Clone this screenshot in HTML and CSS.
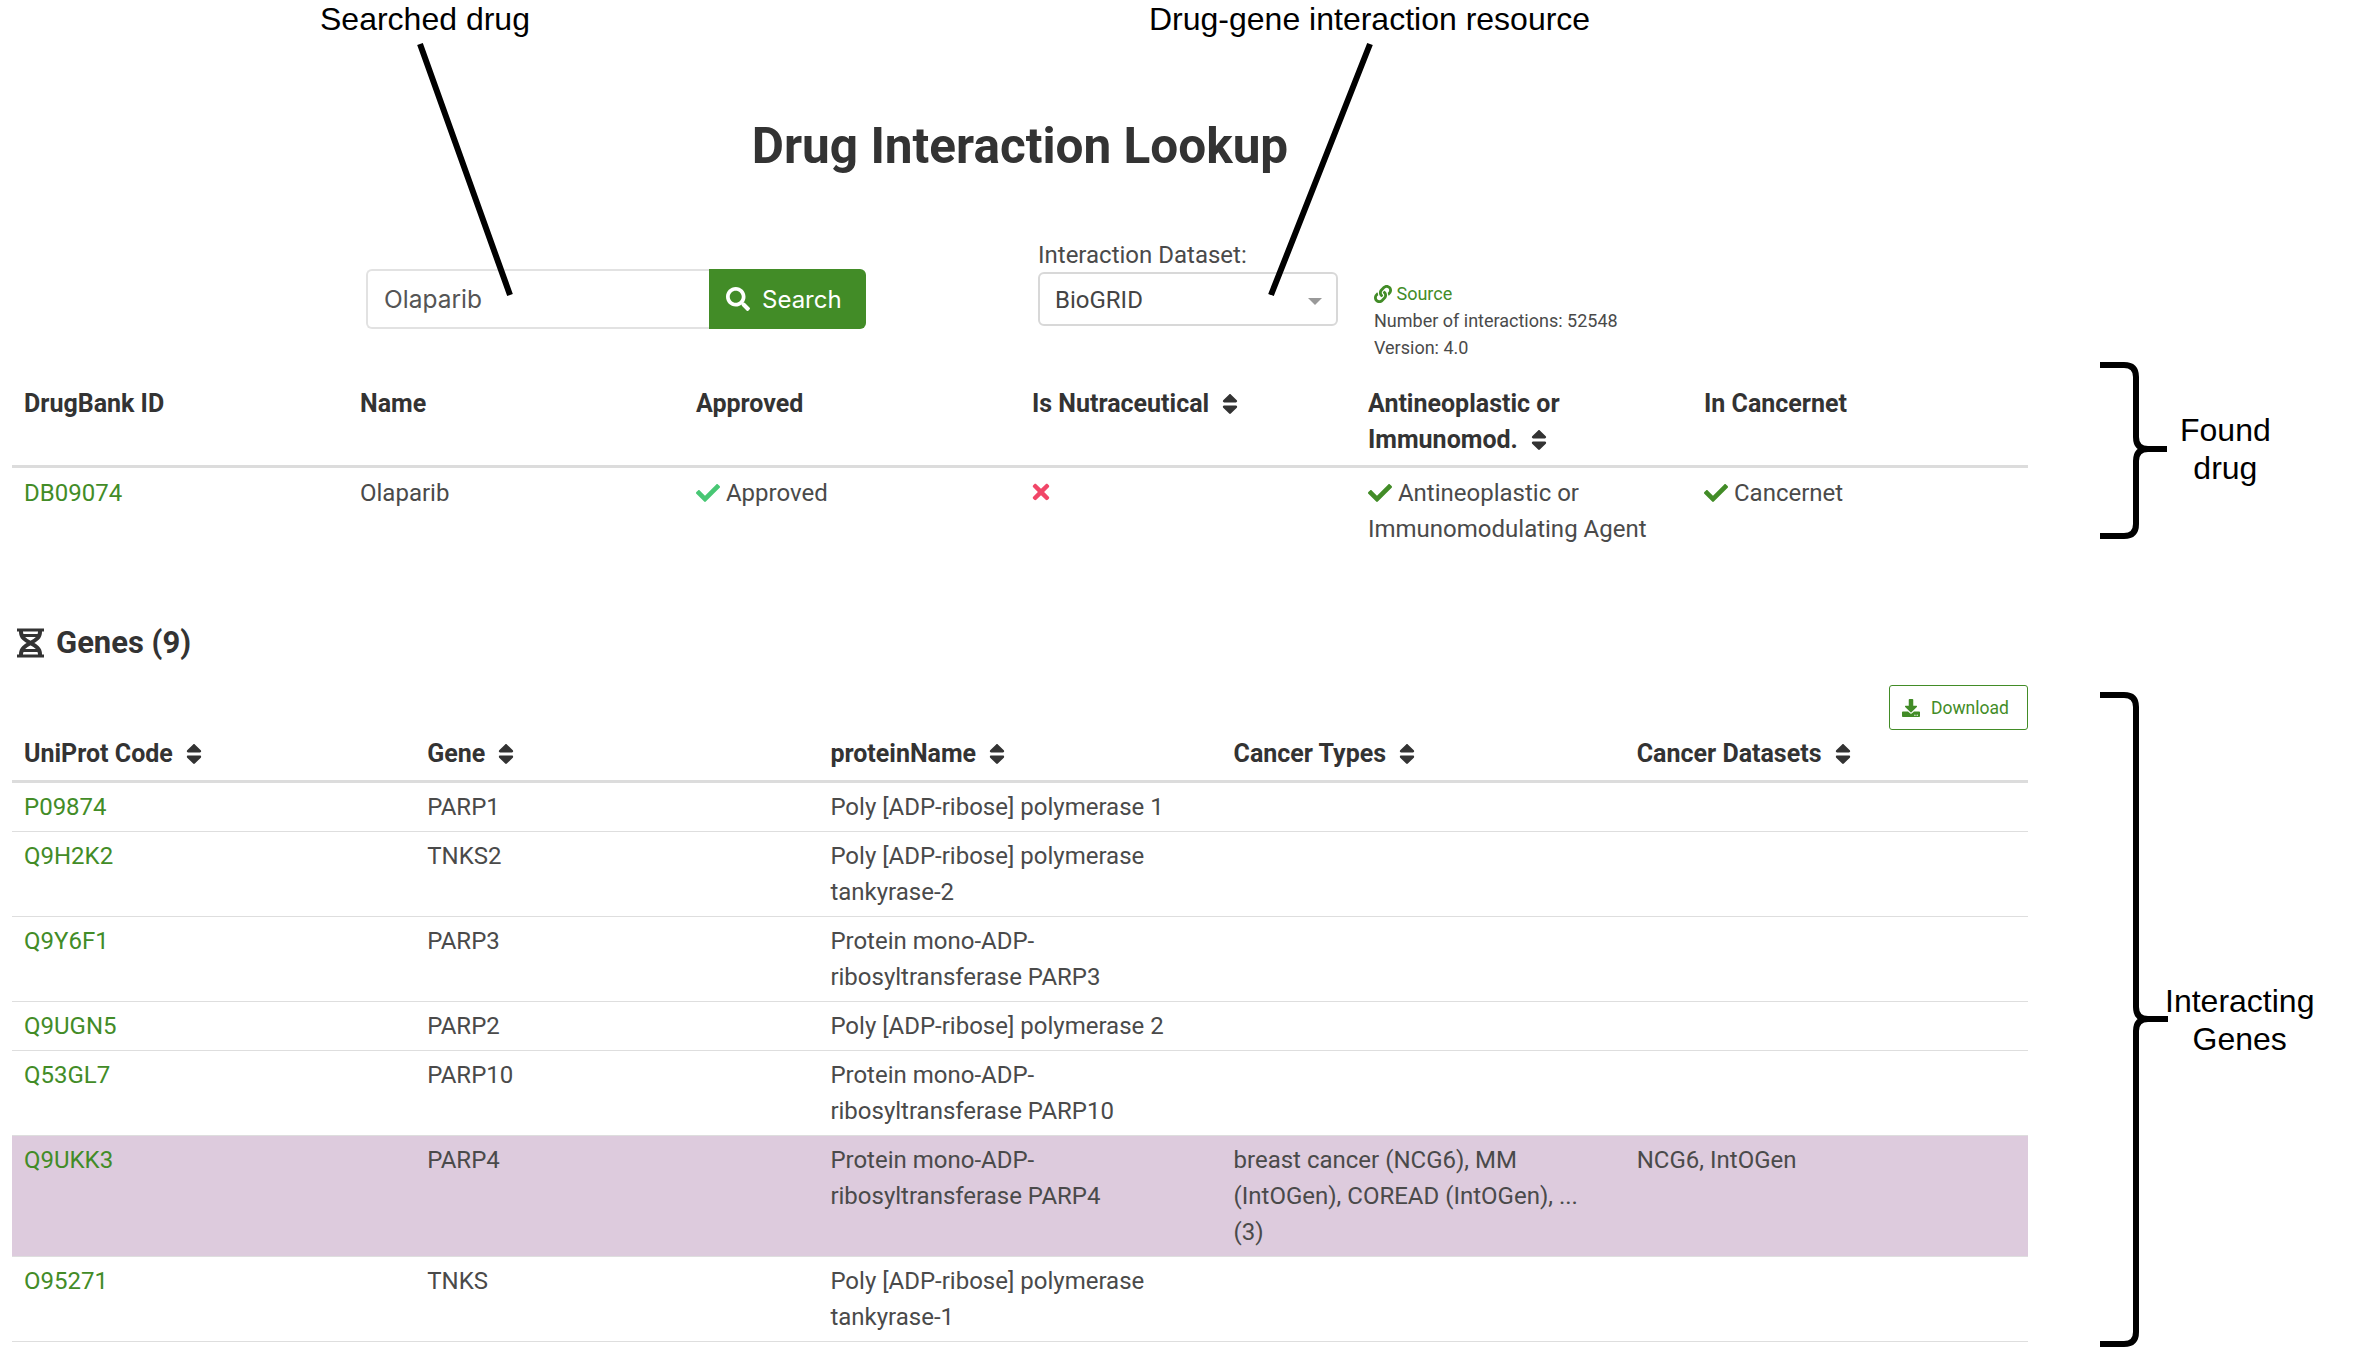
FILE: index.html
```html
<!DOCTYPE html>
<html lang="en">
<head>
  <meta charset="UTF-8">
  <meta name="viewport" content="width=device-width, initial-scale=1.0">
  <title>Drug Interaction Lookup</title>
  <link rel="stylesheet" href="styles.css">
</head>
<body>
  <svg width="0" height="0" class="defs">
    <symbol id="i-sort" viewBox="0 0 320 512"><path d="M41 288h238c21.4 0 32.1 25.9 17 41L177 448c-9.4 9.4-24.6 9.4-33.9 0L24 329c-15.1-15.1-4.4-41 17-41zm255-105L177 64c-9.4-9.4-24.6-9.4-33.9 0L24 183c-15.1 15.1-4.4 41 17 41h238c21.4 0 32.1-25.9 17-41z"/></symbol>
    <symbol id="i-check" viewBox="0 0 512 512"><path d="M173.898 439.404l-166.4-166.4c-9.997-9.997-9.997-26.206 0-36.204l36.203-36.204c9.997-9.998 26.207-9.998 36.204 0L192 312.69 432.095 72.596c9.997-9.997 26.207-9.997 36.204 0l36.203 36.204c9.997 9.997 9.997 26.206 0 36.204l-294.4 294.401c-9.998 9.997-26.207 9.997-36.204-.001z"/></symbol>
  </svg>

  <main class="page">
    <h1 class="title">Drug Interaction Lookup</h1>

    <div class="controls">
      <form class="search">
        <input class="search-input" type="text" value="Olaparib">
        <button class="search-btn" type="button">
          <svg class="search-icon" viewBox="0 0 512 512"><path d="M505 442.7L405.3 343c-4.5-4.5-10.6-7-17-7H372c27.6-35.3 44-79.7 44-128C416 93.1 322.9 0 208 0S0 93.1 0 208s93.1 208 208 208c48.3 0 92.7-16.4 128-44v16.3c0 6.4 2.5 12.5 7 17l99.7 99.7c9.4 9.4 24.6 9.4 33.9 0l28.3-28.3c9.4-9.4 9.4-24.6.1-34zM208 336c-70.7 0-128-57.2-128-128 0-70.7 57.2-128 128-128 70.7 0 128 57.2 128 128 0 70.7-57.2 128-128 128z"/></svg>
          Search
        </button>
      </form>

      <div class="dataset">
        <div class="dataset-label">Interaction Dataset:</div>
        <div class="dataset-select">BioGRID<span class="caret"></span></div>
      </div>

      <div class="dataset-info">
        <a class="source-link" href="#">
          <svg class="link-icon" viewBox="0 0 512 512"><path d="M326.612 185.391c59.747 59.809 58.927 155.698.36 214.59-.11.12-.24.25-.36.37l-67.2 67.2c-59.27 59.27-155.699 59.262-214.96 0-59.27-59.26-59.27-155.7 0-214.96l37.106-37.106c9.84-9.84 26.786-3.3 27.294 10.606.648 17.722 3.826 35.527 9.69 52.721 1.986 5.822.567 12.262-3.783 16.612l-13.087 13.087c-28.026 28.026-28.905 73.66-1.155 101.96 28.024 28.579 74.086 28.749 102.325.51l67.2-67.19c28.191-28.191 28.073-73.757 0-101.83-3.701-3.694-7.429-6.564-10.341-8.569a16.037 16.037 0 0 1-6.947-12.606c-.396-10.567 3.348-21.456 11.698-29.806l21.054-21.055c5.521-5.521 14.182-6.199 20.584-1.731a152.482 152.482 0 0 1 20.522 17.197zM467.547 44.449c-59.261-59.262-155.69-59.27-214.96 0l-67.2 67.2c-.12.12-.25.25-.36.37-58.566 58.892-59.387 154.781.36 214.59a152.454 152.454 0 0 0 20.521 17.196c6.402 4.468 15.064 3.789 20.584-1.731l21.054-21.055c8.35-8.35 12.094-19.239 11.698-29.806a16.037 16.037 0 0 0-6.947-12.606c-2.912-2.005-6.64-4.875-10.341-8.569-28.073-28.073-28.191-73.639 0-101.83l67.2-67.19c28.239-28.239 74.3-28.069 102.325.51 27.75 28.3 26.872 73.934-1.155 101.96l-13.087 13.087c-4.35 4.35-5.769 10.79-3.783 16.612 5.864 17.194 9.042 34.999 9.69 52.721.509 13.906 17.454 20.446 27.294 10.606l37.106-37.106c59.271-59.259 59.271-155.699.001-214.959z"/></svg>
          Source
        </a>
        <div>Number of interactions: 52548</div>
        <div>Version: 4.0</div>
      </div>
    </div>

    <table class="data drug-table">
      <thead>
        <tr>
          <th>DrugBank ID</th>
          <th>Name</th>
          <th>Approved</th>
          <th>Is Nutraceutical <svg class="sort"><use href="#i-sort"/></svg></th>
          <th>Antineoplastic or Immunomod. <svg class="sort"><use href="#i-sort"/></svg></th>
          <th>In Cancernet</th>
        </tr>
      </thead>
      <tbody>
        <tr>
          <td><a href="#">DB09074</a></td>
          <td>Olaparib</td>
          <td><svg class="check check-light"><use href="#i-check"/></svg> Approved</td>
          <td><svg class="cross" viewBox="0 0 352 512"><path d="M242.72 256l100.07-100.07c12.28-12.28 12.28-32.19 0-44.48l-22.24-22.24c-12.28-12.28-32.19-12.28-44.48 0L176 189.28 75.93 89.21c-12.28-12.28-32.19-12.28-44.48 0L9.21 111.45c-12.28 12.28-12.28 32.19 0 44.48L109.28 256 9.21 356.07c-12.28 12.28-12.28 32.19 0 44.48l22.24 22.24c12.28 12.28 32.2 12.28 44.48 0L176 322.72l100.07 100.07c12.28 12.28 32.2 12.28 44.48 0l22.24-22.24c12.28-12.28 12.28-32.19 0-44.48L242.72 256z"/></svg></td>
          <td><svg class="check"><use href="#i-check"/></svg> Antineoplastic or Immunomodulating Agent</td>
          <td><svg class="check"><use href="#i-check"/></svg> Cancernet</td>
        </tr>
      </tbody>
    </table>

    <h2 class="section-title">
      <svg class="dna-icon" viewBox="0 0 27 30">
        <path d="M4 1v3C4 9.500 8 12 13.500 15S23 20.500 23 26v3M23 1v3C23 9.500 19 12 13.500 15S4 20.500 4 26v3" fill="none" stroke="#333" stroke-width="4"/>
        <path d="M0 2h27M0 28h27M5 7.500h17M5 22.500h17" fill="none" stroke="#333" stroke-width="3"/>
      </svg>
      Genes (9)
    </h2>

    <div class="table-tools">
      <a class="download-btn" href="#">
        <svg class="download-icon" viewBox="0 0 512 512"><path d="M216 0h80c13.3 0 24 10.7 24 24v168h87.7c17.8 0 26.7 21.5 14.1 34.1L269.7 378.3c-7.5 7.5-19.8 7.5-27.3 0L90.1 226.1c-12.6-12.6-3.7-34.1 14.1-34.1H192V24c0-13.3 10.7-24 24-24zm296 376v112c0 13.3-10.7 24-24 24H24c-13.3 0-24-10.7-24-24V376c0-13.3 10.7-24 24-24h146.7l49 49c20.1 20.1 52.5 20.1 72.6 0l49-49H488c13.3 0 24 10.7 24 24zm-124 88c0-11-9-20-20-20s-20 9-20 20 9 20 20 20 20-9 20-20zm64 0c0-11-9-20-20-20s-20 9-20 20 9 20 20 20 20-9 20-20z"/></svg>
        Download
      </a>
    </div>

    <table class="data gene-table">
      <thead>
        <tr>
          <th>UniProt Code <svg class="sort"><use href="#i-sort"/></svg></th>
          <th>Gene <svg class="sort"><use href="#i-sort"/></svg></th>
          <th>proteinName <svg class="sort"><use href="#i-sort"/></svg></th>
          <th>Cancer Types <svg class="sort"><use href="#i-sort"/></svg></th>
          <th>Cancer Datasets <svg class="sort"><use href="#i-sort"/></svg></th>
        </tr>
      </thead>
      <tbody>
        <tr><td><a href="#">P09874</a></td><td>PARP1</td><td>Poly [ADP-ribose] polymerase 1</td><td></td><td></td></tr>
        <tr><td><a href="#">Q9H2K2</a></td><td>TNKS2</td><td>Poly [ADP-ribose] polymerase tankyrase-2</td><td></td><td></td></tr>
        <tr><td><a href="#">Q9Y6F1</a></td><td>PARP3</td><td>Protein mono-ADP-ribosyltransferase PARP3</td><td></td><td></td></tr>
        <tr><td><a href="#">Q9UGN5</a></td><td>PARP2</td><td>Poly [ADP-ribose] polymerase 2</td><td></td><td></td></tr>
        <tr><td><a href="#">Q53GL7</a></td><td>PARP10</td><td>Protein mono-ADP-ribosyltransferase PARP10</td><td></td><td></td></tr>
        <tr class="highlight"><td><a href="#">Q9UKK3</a></td><td>PARP4</td><td>Protein mono-ADP-ribosyltransferase PARP4</td><td>breast cancer (NCG6), MM (IntOGen), COREAD (IntOGen), ... (3)</td><td>NCG6, IntOGen</td></tr>
        <tr><td><a href="#">O95271</a></td><td>TNKS</td><td>Poly [ADP-ribose] polymerase tankyrase-1</td><td></td><td></td></tr>
      </tbody>
    </table>
  </main>

  <!-- figure annotations drawn on top of the screenshot -->
  <svg class="marks" width="2361" height="1350" viewBox="0 0 2361 1350">
    <path d="M420 44L510 295M1370 44L1271 295" />
    <path d="M2100 365h24q12 0 12 12v60q0 12 12 12h19M2148 449q-12 0-12 12v63q0 12-12 12h-24" />
    <path d="M2100 695h24q12 0 12 12v300q0 12 12 12h20M2148 1019q-12 0-12 12v301q0 12-12 12h-24" />
  </svg>
  <div class="note note-drug">Searched drug</div>
  <div class="note note-resource">Drug-gene interaction resource</div>
  <div class="note note-found">Found<br>drug</div>
  <div class="note note-genes">Interacting<br>Genes</div>
</body>
</html>
```

FILE: styles.css
```css
* {
  box-sizing: border-box;
}

body {
  margin: 0;
  font-family: Roboto, sans-serif;
  font-size: 24px;
  line-height: 36px;
  color: #4a4a4a;
  background: #fff;
  position: relative;
  height: 1350px;
  overflow: hidden;
}

a {
  color: #428c27;
  text-decoration: none;
}

.defs {
  position: absolute;
}

.page {
  width: 2040px;
  padding: 0 12px;
}

.title {
  margin: 0;
  padding-top: 113px;
  text-align: center;
  font-size: 49.5px;
  line-height: 66px;
  font-weight: 700;
  color: #333;
}

.controls {
  display: flex;
  align-items: flex-start;
  height: 199px;
  padding-top: 60px;
}

.search {
  display: flex;
  margin: 30px 0 0 354px;
}

.search-input {
  width: 343px;
  height: 60px;
  padding: 0 16px;
  border: 2px solid #e2e2e2;
  border-right: 0;
  border-radius: 6px 0 0 6px;
  font-family: Inter, sans-serif;
  font-size: 24.5px;
  color: #555;
  outline: none;
}

.search-btn {
  display: flex;
  align-items: center;
  gap: 12px;
  width: 157px;
  height: 60px;
  padding: 0 17px;
  border: 0;
  border-radius: 0 6px 6px 0;
  background: #428c27;
  color: #fff;
  font-family: Inter, sans-serif;
  font-size: 24px;
}

.search-icon {
  width: 24px;
  height: 24px;
  fill: #fff;
}

.dataset {
  margin-left: 172px;
  width: 300px;
}

.dataset-label {
  line-height: 33px;
}

.dataset-select {
  position: relative;
  height: 54px;
  padding: 0 15px;
  border: 2px solid #d8d8d8;
  border-radius: 6px;
  line-height: 52px;
  color: #444;
}

.caret {
  position: absolute;
  right: 14px;
  top: 24px;
  border-left: 7px solid transparent;
  border-right: 7px solid transparent;
  border-top: 7px solid #999;
}

.dataset-info {
  margin: 41px 0 0 36px;
  font-size: 18px;
  line-height: 27px;
}

.link-icon {
  width: 18px;
  height: 18px;
  fill: #428c27;
  vertical-align: -3px;
}

.data {
  width: 2016px;
  border-collapse: collapse;
  table-layout: fixed;
}

.data th {
  padding: 8px 12px;
  border-bottom: 3px solid #dcdcdc;
  text-align: left;
  vertical-align: top;
  font-size: 25px;
  font-weight: 700;
  color: #333;
}

.data td {
  padding: 6px 12px;
  vertical-align: top;
}

.sort {
  width: 16px;
  height: 26px;
  margin-left: 7px;
  fill: #333;
  vertical-align: -5px;
}

.check {
  width: 24px;
  height: 24px;
  fill: #428c27;
  vertical-align: -4px;
}

.check-light {
  fill: #48c774;
}

.cross {
  width: 18px;
  height: 24px;
  fill: #f14668;
  vertical-align: -3px;
}

.drug-table th {
  padding-bottom: 7px;
}

.drug-table td {
  padding-top: 7px;
}

.section-title {
  display: flex;
  align-items: center;
  gap: 12px;
  margin: 69px 0 0;
  padding-left: 5px;
  font-size: 31px;
  line-height: 42px;
  font-weight: 700;
  color: #333;
}

.dna-icon {
  width: 27px;
  height: 30px;
}

.table-tools {
  display: flex;
  justify-content: flex-end;
  margin-top: 21px;
}

.download-btn {
  display: flex;
  align-items: center;
  gap: 11px;
  width: 139px;
  height: 45px;
  padding-left: 12px;
  border: 1.5px solid #428c27;
  border-radius: 3px;
  font-size: 17.5px;
}

.download-icon {
  width: 18px;
  height: 18px;
  fill: #428c27;
}

.gene-table th {
  padding-top: 6px;
}

.gene-table td {
  border-bottom: 1px solid #dedede;
}

.highlight td {
  background: #ddcbdd;
}

.marks {
  position: absolute;
  top: 0;
  left: 0;
  fill: none;
  stroke: #000;
  stroke-width: 6px;
}

.note {
  position: absolute;
  font-family: "Liberation Sans", Arial, sans-serif;
  font-size: 32px;
  line-height: 38px;
  color: #000;
  text-align: center;
  white-space: nowrap;
}

.note-drug {
  left: 320px;
  top: 0;
}

.note-resource {
  left: 1149px;
  top: 0;
}

.note-found {
  left: 2180px;
  top: 411px;
}

.note-genes {
  left: 2165px;
  top: 982px;
}
```
